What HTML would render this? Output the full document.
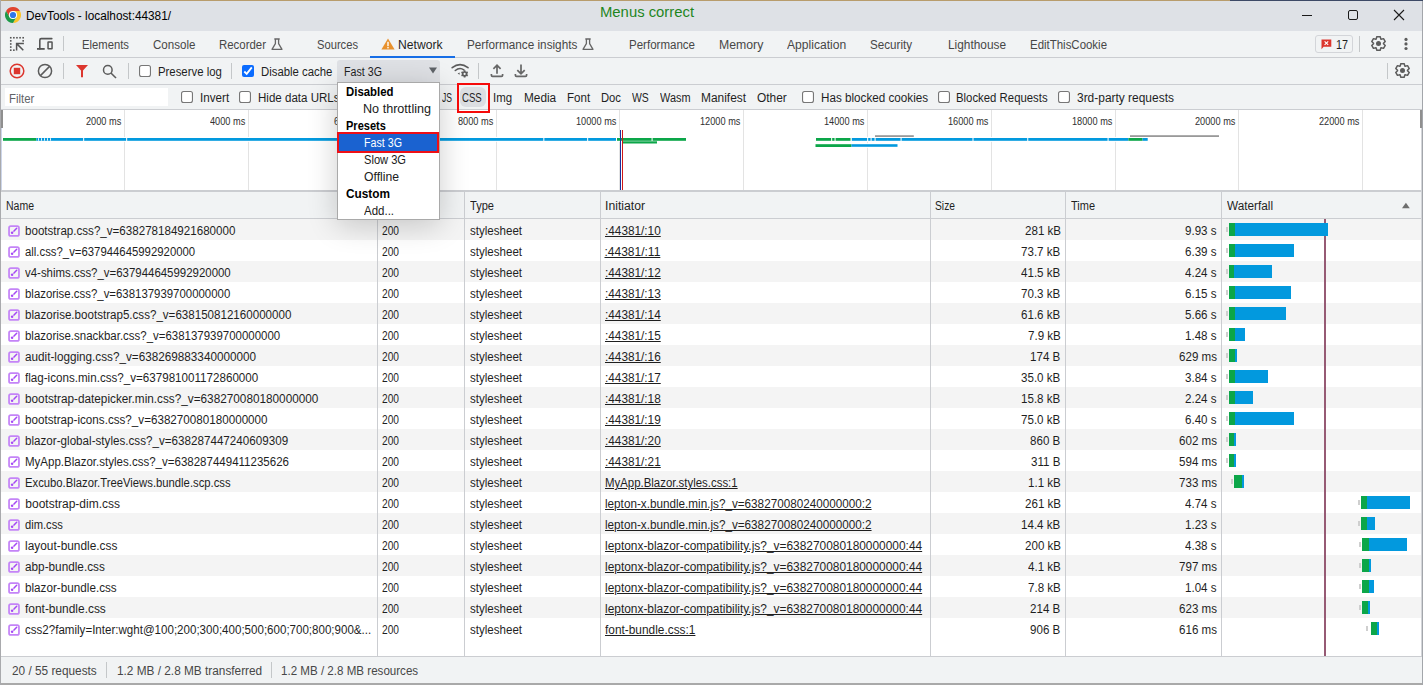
<!DOCTYPE html>
<html><head><meta charset="utf-8"><title>DevTools</title><style>
html,body{margin:0;padding:0;}
body{width:1423px;height:685px;overflow:hidden;position:relative;background:#fff;font-family:"Liberation Sans",sans-serif;}
.t{position:absolute;white-space:nowrap;transform-origin:0 0;}
.r{position:absolute;display:block;}
</style></head><body>
<div class="r" style="left:0px;top:0px;width:1423px;height:685px;background:#ffffff;"></div>
<div class="r" style="left:0px;top:0px;width:1423px;height:31px;background:#dee1e6;"></div>
<div class="r" style="left:0px;top:0px;width:1230px;height:1px;background:#b89c6c;"></div>
<div class="r" style="left:1230px;top:0px;width:193px;height:1px;background:#3d4a66;"></div>
<svg class="r" style="left:5px;top:7px" width="16" height="16" viewBox="0 0 16 16"><path d="M4.54 10 L1.07 4 A8 8 0 0 1 14.93 4 L8 4 Z" fill="#e0442f"/>
<path d="M8 4 L14.93 4 A8 8 0 0 1 8 16 L11.46 10 Z" fill="#fcc52b"/>
<path d="M11.46 10 L8 16 A8 8 0 0 1 1.07 4 L4.54 10 Z" fill="#1d9a48"/>
<circle cx="8" cy="8" r="4.1" fill="#fff"/><circle cx="8" cy="8" r="3.1" fill="#2f77ea"/></svg>
<div class="t" style="left:26.00px;top:10px;font-size:12px;line-height:12px;color:#000000;transform:scaleX(0.9838);">DevTools - localhost:44381/</div>
<div class="t" style="left:599.80px;top:5px;font-size:14px;line-height:14px;color:#1e861e;transform:scaleX(1.0603);">Menus correct</div>
<div class="r" style="left:1302px;top:15px;width:10px;height:1px;background:#1a1a1a;"></div>
<div class="r" style="left:1348px;top:10px;width:10px;height:10px;background:transparent;border:1px solid #1a1a1a;border-radius:2px;box-sizing:border-box;"></div>
<svg class="r" style="left:1393px;top:9px" width="12" height="12" viewBox="0 0 12 12"><path d="M1 1 L11 11 M11 1 L1 11" stroke="#1a1a1a" stroke-width="1.1"/></svg>
<div class="r" style="left:0px;top:31px;width:1423px;height:26px;background:#f1f3f4;"></div>
<div class="r" style="left:0px;top:57px;width:1423px;height:1px;background:#cbcdd1;"></div>
<svg class="r" style="left:8px;top:35px" width="18" height="18" viewBox="0 0 18 18"><rect x="1.95" y="1.95" width="1.6" height="1.6" fill="#555"/><rect x="5.06" y="1.95" width="1.6" height="1.6" fill="#555"/><rect x="8.16" y="1.95" width="1.6" height="1.6" fill="#555"/><rect x="11.27" y="1.95" width="1.6" height="1.6" fill="#555"/><rect x="14.37" y="1.95" width="1.6" height="1.6" fill="#555"/><rect x="1.95" y="5.06" width="1.6" height="1.6" fill="#555"/><rect x="1.95" y="8.16" width="1.6" height="1.6" fill="#555"/><rect x="1.95" y="11.27" width="1.6" height="1.6" fill="#555"/><rect x="1.95" y="14.37" width="1.6" height="1.6" fill="#555"/><rect x="5.06" y="14.37" width="1.6" height="1.6" fill="#555"/><rect x="14.37" y="5.06" width="1.6" height="1.6" fill="#555"/><path d="M8.6 15.4 V8.6 H15.9 M8.9 8.9 L15.3 15.2" stroke="#555" stroke-width="1.5" fill="none"/></svg>
<svg class="r" style="left:35px;top:35px" width="20" height="18" viewBox="0 0 20 18"><path d="M4.8 13.9 V5.2 Q4.8 3.66 6.3 3.66 H16.8" stroke="#555" stroke-width="1.6" fill="none" stroke-linecap="round"/><path d="M2 13.9 H9.7" stroke="#555" stroke-width="1.8"/><rect x="13.05" y="6.95" width="4" height="6.9" rx="0.3" stroke="#555" stroke-width="1.5" fill="none"/></svg>
<div class="r" style="left:63px;top:36px;width:1px;height:15px;background:#c4c7c9;"></div>
<div class="t" style="left:82.00px;top:39px;font-size:12px;line-height:12px;color:#474747;transform:scaleX(0.9397);">Elements</div>
<div class="t" style="left:152.50px;top:39px;font-size:12px;line-height:12px;color:#474747;transform:scaleX(0.9652);">Console</div>
<div class="t" style="left:219.00px;top:39px;font-size:12px;line-height:12px;color:#474747;transform:scaleX(0.9522);">Recorder</div>
<div class="t" style="left:316.50px;top:39px;font-size:12px;line-height:12px;color:#474747;transform:scaleX(0.9315);">Sources</div>
<div class="t" style="left:398.00px;top:39px;font-size:12px;line-height:12px;color:#1f1f1f;transform:scaleX(1.0110);">Network</div>
<div class="t" style="left:466.70px;top:39px;font-size:12px;line-height:12px;color:#474747;transform:scaleX(0.9787);">Performance insights</div>
<div class="t" style="left:629.00px;top:39px;font-size:12px;line-height:12px;color:#474747;transform:scaleX(0.9609);">Performance</div>
<div class="t" style="left:718.80px;top:39px;font-size:12px;line-height:12px;color:#474747;transform:scaleX(1.0221);">Memory</div>
<div class="t" style="left:786.80px;top:39px;font-size:12px;line-height:12px;color:#474747;transform:scaleX(1.0085);">Application</div>
<div class="t" style="left:870.00px;top:39px;font-size:12px;line-height:12px;color:#474747;transform:scaleX(0.9690);">Security</div>
<div class="t" style="left:948.00px;top:39px;font-size:12px;line-height:12px;color:#474747;transform:scaleX(0.9880);">Lighthouse</div>
<div class="t" style="left:1030.00px;top:39px;font-size:12px;line-height:12px;color:#474747;transform:scaleX(0.9541);">EditThisCookie</div>
<svg class="r" style="left:271px;top:38px" width="12" height="13" viewBox="0 0 12 13"><path d="M3.3 1 H8.7 M4.4 1 V5.6 L1 11.3 H11 L7.6 5.6 V1" stroke="#666" stroke-width="1.3" fill="none" stroke-linejoin="round"/></svg>
<svg class="r" style="left:582px;top:38px" width="12" height="13" viewBox="0 0 12 13"><path d="M3.3 1 H8.7 M4.4 1 V5.6 L1 11.3 H11 L7.6 5.6 V1" stroke="#666" stroke-width="1.3" fill="none" stroke-linejoin="round"/></svg>
<svg class="r" style="left:381px;top:38px" width="14" height="12" viewBox="0 0 14 12"><path d="M7 0.5 L13.6 11.6 H0.4 Z" fill="#e8912d"/><rect x="6.3" y="3.8" width="1.4" height="4.4" fill="#fff"/><rect x="6.3" y="9" width="1.4" height="1.4" fill="#fff"/></svg>
<div class="r" style="left:370px;top:56px;width:85px;height:2px;background:#176ee6;"></div>
<div class="r" style="left:1315px;top:35px;width:38px;height:18px;background:transparent;border:1px solid #d3d5d9;border-radius:3px;box-sizing:border-box;"></div>
<svg class="r" style="left:1321px;top:39px" width="11" height="11" viewBox="0 0 11 11"><path d="M0.5 0.5 H10.3 V7.8 H2.6 L0.5 10.3 Z" fill="#dc362e"/><path d="M3.6 2.3 L7.2 5.9 M7.2 2.3 L3.6 5.9" stroke="#fff" stroke-width="1.1"/></svg>
<div class="t" style="left:1336.00px;top:39px;font-size:12px;line-height:12px;color:#1f1f1f;transform:scaleX(0.8993);">17</div>
<div class="r" style="left:1359px;top:36px;width:1px;height:16px;background:#c4c7c9;"></div>
<svg class="r" style="left:1371px;top:36px" width="15" height="15" viewBox="0 0 15 15"><path d="M5.15 3.09 L5.81 0.71 L9.19 0.71 L9.85 3.09 L10.15 3.26 L12.54 2.64 L14.23 5.57 L12.50 7.33 L12.50 7.67 L14.23 9.43 L12.54 12.36 L10.15 11.74 L9.85 11.91 L9.19 14.29 L5.81 14.29 L5.15 11.91 L4.85 11.74 L2.46 12.36 L0.77 9.43 L2.50 7.67 L2.50 7.33 L0.77 5.57 L2.46 2.64 L4.85 3.26 Z" fill="none" stroke="#5c5c5c" stroke-width="1.5" stroke-linejoin="round"/><circle cx="7.5" cy="7.5" r="2.5" fill="#5c5c5c"/></svg>
<svg class="r" style="left:1403px;top:37px" width="6" height="14" viewBox="0 0 6 14"><circle cx="3" cy="2.4" r="1.6" fill="#5c5c5c"/><circle cx="3" cy="6.9" r="1.6" fill="#5c5c5c"/><circle cx="3" cy="11.5" r="1.6" fill="#5c5c5c"/></svg>
<div class="r" style="left:0px;top:58px;width:1423px;height:26px;background:#f1f3f4;"></div>
<div class="r" style="left:0px;top:84px;width:1423px;height:1px;background:#cbcdd1;"></div>
<svg class="r" style="left:9px;top:63px" width="16" height="16" viewBox="0 0 16 16"><circle cx="8" cy="8" r="6.8" stroke="#dc362e" stroke-width="1.5" fill="none"/><rect x="4.8" y="4.8" width="6.4" height="6.4" fill="#dc362e"/></svg>
<svg class="r" style="left:37px;top:63px" width="16" height="16" viewBox="0 0 16 16"><circle cx="8" cy="8" r="6.6" stroke="#5c5c5c" stroke-width="1.5" fill="none"/><path d="M3.4 12.6 L12.6 3.4" stroke="#5c5c5c" stroke-width="1.5"/></svg>
<div class="r" style="left:63px;top:63px;width:1px;height:16px;background:#c4c7c9;"></div>
<svg class="r" style="left:76px;top:65px" width="13" height="13" viewBox="0 0 13 13"><path d="M0 0 H12 L7 5.6 V12.2 H5 V5.6 Z" fill="#dc362e"/></svg>
<svg class="r" style="left:102px;top:64px" width="16" height="15" viewBox="0 0 16 15"><circle cx="5.8" cy="5.9" r="4.3" stroke="#5c5c5c" stroke-width="1.5" fill="none"/><path d="M8.9 9 L14 14" stroke="#5c5c5c" stroke-width="1.6"/></svg>
<div class="r" style="left:128px;top:63px;width:1px;height:16px;background:#c4c7c9;"></div>
<svg class="r" style="left:139px;top:65px" width="12" height="12" viewBox="0 0 12 12"><rect x="0.55" y="0.55" width="10.9" height="10.9" rx="2" fill="#fff" stroke="#777" stroke-width="1.1"/></svg>
<div class="t" style="left:157.50px;top:66px;font-size:12px;line-height:12px;color:#1f1f1f;transform:scaleX(0.9472);">Preserve log</div>
<div class="r" style="left:231px;top:63px;width:1px;height:16px;background:#c4c7c9;"></div>
<svg class="r" style="left:242px;top:65px" width="12" height="12" viewBox="0 0 12 12"><rect x="0" y="0" width="12" height="12" rx="2" fill="#0b6cff"/><path d="M2.3 6.5 L4.7 8.9 L9.8 2.4" stroke="#fff" stroke-width="1.8" fill="none"/></svg>
<div class="t" style="left:260.60px;top:66px;font-size:12px;line-height:12px;color:#1f1f1f;transform:scaleX(0.9473);">Disable cache</div>
<div class="r" style="left:337px;top:60px;width:103px;height:22px;background:#dfe1e5;border-radius:3px 3px 0 0;"></div>
<div class="t" style="left:343.70px;top:66px;font-size:12px;line-height:12px;color:#1f1f1f;transform:scaleX(0.8885);">Fast 3G</div>
<svg class="r" style="left:429px;top:67px" width="8" height="7" viewBox="0 0 8 7"><path d="M0 0.5 H8 L4 6.5 Z" fill="#5f6368"/></svg>
<svg class="r" style="left:450px;top:62px" width="20" height="16" viewBox="0 0 20 16"><path d="M2.2 5.7 Q10 -0.5 18 5.7" stroke="#5c5c5c" stroke-width="1.6" fill="none" stroke-linecap="round"/>
<path d="M5.3 8.5 Q9.6 4.8 13.9 7.8" stroke="#5c5c5c" stroke-width="1.6" fill="none" stroke-linecap="round"/>
<path d="M7.6 11.6 L9.6 10.4 V12.8 Z" fill="#5c5c5c"/><rect x="13.70" y="8.30" width="1.8" height="7.2" fill="#5c5c5c" transform="rotate(0 14.6 11.9)"/><rect x="13.70" y="8.30" width="1.8" height="7.2" fill="#5c5c5c" transform="rotate(60 14.6 11.9)"/><rect x="13.70" y="8.30" width="1.8" height="7.2" fill="#5c5c5c" transform="rotate(120 14.6 11.9)"/><circle cx="14.6" cy="11.9" r="2.7" fill="#5c5c5c"/><circle cx="14.6" cy="11.9" r="1.1" fill="#f1f3f4"/></svg>
<div class="r" style="left:478px;top:63px;width:1px;height:16px;background:#c4c7c9;"></div>
<svg class="r" style="left:490px;top:63px" width="14" height="15" viewBox="0 0 14 15"><path d="M7 10.8 V2.6 M3.4 5.8 L7 2.2 L10.6 5.8" stroke="#666" stroke-width="1.7" fill="none"/><path d="M1.4 11 V12.3 Q1.4 13.4 2.5 13.4 H11.5 Q12.6 13.4 12.6 12.3 V11" stroke="#666" stroke-width="1.7" fill="none"/></svg>
<svg class="r" style="left:514px;top:63px" width="14" height="15" viewBox="0 0 14 15"><path d="M7 1.6 V10.2 M3.3 7.1 L7 10.8 L10.7 7.1" stroke="#666" stroke-width="1.7" fill="none"/><path d="M1.4 11 V12.3 Q1.4 13.4 2.5 13.4 H11.5 Q12.6 13.4 12.6 12.3 V11" stroke="#666" stroke-width="1.7" fill="none"/></svg>
<div class="r" style="left:1387px;top:63px;width:1px;height:16px;background:#c4c7c9;"></div>
<svg class="r" style="left:1395px;top:63px" width="15" height="15" viewBox="0 0 15 15"><path d="M5.15 3.09 L5.81 0.71 L9.19 0.71 L9.85 3.09 L10.15 3.26 L12.54 2.64 L14.23 5.57 L12.50 7.33 L12.50 7.67 L14.23 9.43 L12.54 12.36 L10.15 11.74 L9.85 11.91 L9.19 14.29 L5.81 14.29 L5.15 11.91 L4.85 11.74 L2.46 12.36 L0.77 9.43 L2.50 7.67 L2.50 7.33 L0.77 5.57 L2.46 2.64 L4.85 3.26 Z" fill="none" stroke="#5c5c5c" stroke-width="1.5" stroke-linejoin="round"/><circle cx="7.5" cy="7.5" r="2.5" fill="#5c5c5c"/></svg>
<div class="r" style="left:0px;top:85px;width:1423px;height:24px;background:#f1f3f4;"></div>
<div class="r" style="left:0px;top:109px;width:1423px;height:1px;background:#cbcdd1;"></div>
<div class="r" style="left:5px;top:88px;width:163px;height:18px;background:#ffffff;"></div>
<div class="t" style="left:8.60px;top:93px;font-size:12px;line-height:12px;color:#5f6368;transform:scaleX(0.9486);">Filter</div>
<svg class="r" style="left:181px;top:91px" width="12" height="12" viewBox="0 0 12 12"><rect x="0.55" y="0.55" width="10.9" height="10.9" rx="2" fill="#fff" stroke="#777" stroke-width="1.1"/></svg>
<div class="t" style="left:199.80px;top:92px;font-size:12px;line-height:12px;color:#1f1f1f;transform:scaleX(0.9700);">Invert</div>
<svg class="r" style="left:239px;top:91px" width="12" height="12" viewBox="0 0 12 12"><rect x="0.55" y="0.55" width="10.9" height="10.9" rx="2" fill="#fff" stroke="#777" stroke-width="1.1"/></svg>
<div class="t" style="left:258.00px;top:92px;font-size:12px;line-height:12px;color:#1f1f1f;transform:scaleX(0.9622);">Hide data URLs</div>
<div class="t" style="left:441.60px;top:92px;font-size:12px;line-height:12px;color:#1f1f1f;transform:scaleX(0.7143);">JS</div>
<div class="r" style="left:460px;top:87px;width:26px;height:20px;background:#dcdee2;border-radius:6px;"></div>
<div class="t" style="left:462.40px;top:92px;font-size:12px;line-height:12px;color:#1f1f1f;transform:scaleX(0.7985);">CSS</div>
<div class="t" style="left:493.30px;top:92px;font-size:12px;line-height:12px;color:#1f1f1f;transform:scaleX(0.9550);">Img</div>
<div class="t" style="left:523.80px;top:92px;font-size:12px;line-height:12px;color:#1f1f1f;transform:scaleX(0.9851);">Media</div>
<div class="t" style="left:566.70px;top:92px;font-size:12px;line-height:12px;color:#1f1f1f;transform:scaleX(0.9625);">Font</div>
<div class="t" style="left:600.70px;top:92px;font-size:12px;line-height:12px;color:#1f1f1f;transform:scaleX(0.9370);">Doc</div>
<div class="t" style="left:631.60px;top:92px;font-size:12px;line-height:12px;color:#1f1f1f;transform:scaleX(0.8692);">WS</div>
<div class="t" style="left:659.50px;top:92px;font-size:12px;line-height:12px;color:#1f1f1f;transform:scaleX(0.9088);">Wasm</div>
<div class="t" style="left:701.30px;top:92px;font-size:12px;line-height:12px;color:#1f1f1f;transform:scaleX(0.9946);">Manifest</div>
<div class="t" style="left:756.90px;top:92px;font-size:12px;line-height:12px;color:#1f1f1f;transform:scaleX(0.9933);">Other</div>
<svg class="r" style="left:802px;top:91px" width="12" height="12" viewBox="0 0 12 12"><rect x="0.55" y="0.55" width="10.9" height="10.9" rx="2" fill="#fff" stroke="#777" stroke-width="1.1"/></svg>
<div class="t" style="left:820.70px;top:92px;font-size:12px;line-height:12px;color:#1f1f1f;transform:scaleX(0.9732);">Has blocked cookies</div>
<svg class="r" style="left:938px;top:91px" width="12" height="12" viewBox="0 0 12 12"><rect x="0.55" y="0.55" width="10.9" height="10.9" rx="2" fill="#fff" stroke="#777" stroke-width="1.1"/></svg>
<div class="t" style="left:956.40px;top:92px;font-size:12px;line-height:12px;color:#1f1f1f;transform:scaleX(0.9472);">Blocked Requests</div>
<svg class="r" style="left:1058px;top:91px" width="12" height="12" viewBox="0 0 12 12"><rect x="0.55" y="0.55" width="10.9" height="10.9" rx="2" fill="#fff" stroke="#777" stroke-width="1.1"/></svg>
<div class="t" style="left:1076.90px;top:92px;font-size:12px;line-height:12px;color:#1f1f1f;transform:scaleX(0.9953);">3rd-party requests</div>
<div class="r" style="left:0px;top:110px;width:1423px;height:80px;background:#ffffff;"></div>
<div class="r" style="left:0px;top:190px;width:1423px;height:2px;background:#cbcdd1;"></div>
<div class="r" style="left:124px;top:110px;width:1px;height:80px;background:#e3e3e3;"></div>
<div class="t" style="left:86.41px;top:117px;font-size:10px;line-height:10px;color:#303030;transform:scaleX(0.9200);">2000 ms</div>
<div class="r" style="left:248px;top:110px;width:1px;height:80px;background:#e3e3e3;"></div>
<div class="t" style="left:210.41px;top:117px;font-size:10px;line-height:10px;color:#303030;transform:scaleX(0.9200);">4000 ms</div>
<div class="r" style="left:372px;top:110px;width:1px;height:80px;background:#e3e3e3;"></div>
<div class="t" style="left:334.41px;top:117px;font-size:10px;line-height:10px;color:#303030;transform:scaleX(0.9200);">6000 ms</div>
<div class="r" style="left:496px;top:110px;width:1px;height:80px;background:#e3e3e3;"></div>
<div class="t" style="left:458.41px;top:117px;font-size:10px;line-height:10px;color:#303030;transform:scaleX(0.9200);">8000 ms</div>
<div class="r" style="left:619px;top:110px;width:1px;height:80px;background:#e3e3e3;"></div>
<div class="t" style="left:576.29px;top:117px;font-size:10px;line-height:10px;color:#303030;transform:scaleX(0.9200);">10000 ms</div>
<div class="r" style="left:743px;top:110px;width:1px;height:80px;background:#e3e3e3;"></div>
<div class="t" style="left:700.29px;top:117px;font-size:10px;line-height:10px;color:#303030;transform:scaleX(0.9200);">12000 ms</div>
<div class="r" style="left:867px;top:110px;width:1px;height:80px;background:#e3e3e3;"></div>
<div class="t" style="left:824.29px;top:117px;font-size:10px;line-height:10px;color:#303030;transform:scaleX(0.9200);">14000 ms</div>
<div class="r" style="left:991px;top:110px;width:1px;height:80px;background:#e3e3e3;"></div>
<div class="t" style="left:948.29px;top:117px;font-size:10px;line-height:10px;color:#303030;transform:scaleX(0.9200);">16000 ms</div>
<div class="r" style="left:1115px;top:110px;width:1px;height:80px;background:#e3e3e3;"></div>
<div class="t" style="left:1072.29px;top:117px;font-size:10px;line-height:10px;color:#303030;transform:scaleX(0.9200);">18000 ms</div>
<div class="r" style="left:1238px;top:110px;width:1px;height:80px;background:#e3e3e3;"></div>
<div class="t" style="left:1195.29px;top:117px;font-size:10px;line-height:10px;color:#303030;transform:scaleX(0.9200);">20000 ms</div>
<div class="r" style="left:1362px;top:110px;width:1px;height:80px;background:#e3e3e3;"></div>
<div class="t" style="left:1319.29px;top:117px;font-size:10px;line-height:10px;color:#303030;transform:scaleX(0.9200);">22000 ms</div>
<div class="r" style="left:1420px;top:110px;width:2px;height:18px;background:#8f8f8f;"></div>
<svg class="r" style="left:0px;top:110px" width="1423" height="80" viewBox="0 0 1423 80"><rect x="3.00" y="27.00" width="33.40" height="4.8" fill="#fff"/><rect x="36.40" y="27.00" width="579.60" height="4.8" fill="#fff"/><rect x="617.00" y="27.00" width="69.00" height="4.8" fill="#fff"/><rect x="622.80" y="30.30" width="34.20" height="4.2" fill="#fff"/><rect x="816.00" y="27.00" width="34.50" height="4.8" fill="#fff"/><rect x="851.80" y="27.00" width="276.60" height="4.8" fill="#fff"/><rect x="815.50" y="33.20" width="35.90" height="4.8" fill="#fff"/><rect x="851.40" y="33.20" width="46.10" height="4.6" fill="#fff"/><rect x="875.00" y="24.20" width="38.80" height="3.8" fill="#fff"/><rect x="1128.40" y="27.00" width="14.20" height="4.8" fill="#fff"/><rect x="1142.60" y="27.00" width="5.10" height="4.8" fill="#fff"/><rect x="1130.00" y="24.20" width="89.00" height="3.8" fill="#fff"/><rect x="3.00" y="28.00" width="33.40" height="2.8" fill="#0ca649"/><rect x="36.40" y="28.00" width="579.60" height="2.8" fill="#0299de"/><rect x="38" y="28.2" width="1" height="2.5" fill="#e8f4fb"/><rect x="41" y="28.2" width="1" height="2.5" fill="#e8f4fb"/><rect x="44" y="28.2" width="1" height="2.5" fill="#e8f4fb"/><rect x="47" y="28.2" width="1" height="2.5" fill="#e8f4fb"/><rect x="50" y="28.2" width="1" height="2.5" fill="#e8f4fb"/><rect x="617.00" y="28.00" width="69.00" height="2.8" fill="#0ca649"/><rect x="622.80" y="31.30" width="34.20" height="2.2" fill="#0ca649"/><rect x="816.00" y="28.00" width="34.50" height="2.8" fill="#0ca649"/><rect x="851.80" y="28.00" width="276.60" height="2.8" fill="#0299de"/><rect x="815.50" y="34.20" width="35.90" height="2.8" fill="#0ca649"/><rect x="851.40" y="34.20" width="46.10" height="2.6" fill="#0299de"/><rect x="875.00" y="25.20" width="38.80" height="1.8" fill="#999999"/><rect x="1128.40" y="28.00" width="14.20" height="2.8" fill="#0ca649"/><rect x="1142.60" y="28.00" width="5.10" height="2.8" fill="#0299de"/><rect x="1130.00" y="25.20" width="89.00" height="1.8" fill="#999999"/><rect x="83.00" y="27.8" width="1.2" height="3.2" fill="#fff" opacity="0.85"/><rect x="126.00" y="27.8" width="1.2" height="3.2" fill="#fff" opacity="0.85"/><rect x="543.20" y="27.8" width="1.2" height="3.2" fill="#fff" opacity="0.85"/><rect x="587.00" y="27.8" width="1.2" height="3.2" fill="#fff" opacity="0.85"/><rect x="651.50" y="27.8" width="1.2" height="3.2" fill="#fff" opacity="0.85"/><rect x="831.00" y="27.8" width="1.2" height="3.2" fill="#fff" opacity="0.85"/><rect x="834.50" y="27.8" width="1.2" height="3.2" fill="#fff" opacity="0.85"/><rect x="867.00" y="27.8" width="1.2" height="3.2" fill="#fff" opacity="0.85"/><rect x="870.50" y="27.8" width="1.2" height="3.2" fill="#fff" opacity="0.85"/><rect x="874.50" y="27.8" width="1.2" height="3.2" fill="#fff" opacity="0.85"/><rect x="900.50" y="27.8" width="1.2" height="3.2" fill="#fff" opacity="0.85"/><rect x="972.40" y="27.8" width="1.2" height="3.2" fill="#fff" opacity="0.85"/><rect x="1027.10" y="27.8" width="1.2" height="3.2" fill="#fff" opacity="0.85"/><rect x="1107.50" y="27.8" width="1.2" height="3.2" fill="#fff" opacity="0.85"/></svg>
<div class="r" style="left:620px;top:130px;width:1px;height:60px;background:#1a2fa0;"></div>
<div class="r" style="left:622px;top:130px;width:1px;height:60px;background:#d01818;"></div>
<div class="r" style="left:0px;top:192px;width:1421px;height:26px;background:#f1f3f4;"></div>
<div class="r" style="left:0px;top:218px;width:1421px;height:1px;background:#cbcdd1;"></div>
<div class="t" style="left:6.20px;top:200px;font-size:12px;line-height:12px;color:#1f1f1f;transform:scaleX(0.8746);">Name</div>
<div class="t" style="left:469.60px;top:200px;font-size:12px;line-height:12px;color:#1f1f1f;transform:scaleX(0.9225);">Type</div>
<div class="t" style="left:605.40px;top:200px;font-size:12px;line-height:12px;color:#1f1f1f;transform:scaleX(1.0167);">Initiator</div>
<div class="t" style="left:934.80px;top:200px;font-size:12px;line-height:12px;color:#1f1f1f;transform:scaleX(0.8568);">Size</div>
<div class="t" style="left:1071.00px;top:200px;font-size:12px;line-height:12px;color:#1f1f1f;transform:scaleX(0.9148);">Time</div>
<div class="t" style="left:1226.50px;top:200px;font-size:12px;line-height:12px;color:#1f1f1f;transform:scaleX(0.9807);">Waterfall</div>
<svg class="r" style="left:1401px;top:202px" width="9" height="7" viewBox="0 0 9 7"><path d="M1 6.3 L4.9 0.7 L8.8 6.3 Z" fill="#6e6e6e"/></svg>
<div class="r" style="left:0px;top:219px;width:1421px;height:437px;background:#ffffff;"></div>
<div class="r" style="left:1px;top:219px;width:1420px;height:21px;background:#f4f4f4;"></div>
<div class="r" style="left:1px;top:261px;width:1420px;height:21px;background:#f4f4f4;"></div>
<div class="r" style="left:1px;top:303px;width:1420px;height:21px;background:#f4f4f4;"></div>
<div class="r" style="left:1px;top:345px;width:1420px;height:21px;background:#f4f4f4;"></div>
<div class="r" style="left:1px;top:387px;width:1420px;height:21px;background:#f4f4f4;"></div>
<div class="r" style="left:1px;top:429px;width:1420px;height:21px;background:#f4f4f4;"></div>
<div class="r" style="left:1px;top:471px;width:1420px;height:21px;background:#f4f4f4;"></div>
<div class="r" style="left:1px;top:513px;width:1420px;height:21px;background:#f4f4f4;"></div>
<div class="r" style="left:1px;top:555px;width:1420px;height:21px;background:#f4f4f4;"></div>
<div class="r" style="left:1px;top:597px;width:1420px;height:21px;background:#f4f4f4;"></div>
<div class="r" style="left:377px;top:192px;width:1px;height:464px;background:#cbcdd1;"></div>
<div class="r" style="left:464px;top:192px;width:1px;height:464px;background:#cbcdd1;"></div>
<div class="r" style="left:600px;top:192px;width:1px;height:464px;background:#cbcdd1;"></div>
<div class="r" style="left:930px;top:192px;width:1px;height:464px;background:#cbcdd1;"></div>
<div class="r" style="left:1065px;top:192px;width:1px;height:464px;background:#cbcdd1;"></div>
<div class="r" style="left:1221px;top:192px;width:1px;height:464px;background:#cbcdd1;"></div>
<div class="r" style="left:1324px;top:219px;width:2px;height:437px;background:#965a74;"></div>
<svg class="r" style="left:8px;top:225px" width="12" height="12" viewBox="0 0 12 12"><rect x="1.05" y="1.05" width="9.9" height="9.9" rx="1.8" stroke="#c484f7" stroke-width="1.75" fill="none"/><path d="M6 6.1 L8.7 3.3" stroke="#a548f5" stroke-width="1.5" stroke-linecap="round"/><circle cx="4.1" cy="7.8" r="1.25" fill="#a548f5"/></svg>
<div class="t" style="left:25.30px;top:225px;font-size:12px;line-height:12px;color:#1f1f1f;transform:scaleX(0.9656);">bootstrap.css?_v=638278184921680000</div>
<div class="t" style="left:382.30px;top:225px;font-size:12px;line-height:12px;color:#1f1f1f;transform:scaleX(0.8493);">200</div>
<div class="t" style="left:469.60px;top:225px;font-size:12px;line-height:12px;color:#1f1f1f;transform:scaleX(0.9627);">stylesheet</div>
<div class="t" style="left:604.50px;top:225px;font-size:12px;line-height:12px;color:#1f1f1f;transform:scaleX(0.9826);text-decoration:underline;">:44381/:10</div>
<div class="t" style="left:1024.66px;top:225px;font-size:12px;line-height:12px;color:#1f1f1f;transform:scaleX(0.9650);">281 kB</div>
<div class="t" style="left:1185.37px;top:225px;font-size:12px;line-height:12px;color:#1f1f1f;transform:scaleX(0.9650);">9.93 s</div>
<div class="r" style="left:1226px;top:227px;width:2px;height:5px;background:#cfcfcf;"></div>
<div class="r" style="left:1229px;top:223px;width:6px;height:13px;background:#0ca649;"></div>
<div class="r" style="left:1235px;top:223px;width:93px;height:13px;background:#0299de;"></div>
<svg class="r" style="left:8px;top:246px" width="12" height="12" viewBox="0 0 12 12"><rect x="1.05" y="1.05" width="9.9" height="9.9" rx="1.8" stroke="#c484f7" stroke-width="1.75" fill="none"/><path d="M6 6.1 L8.7 3.3" stroke="#a548f5" stroke-width="1.5" stroke-linecap="round"/><circle cx="4.1" cy="7.8" r="1.25" fill="#a548f5"/></svg>
<div class="t" style="left:25.30px;top:246px;font-size:12px;line-height:12px;color:#1f1f1f;transform:scaleX(0.9461);">all.css?_v=637944645992920000</div>
<div class="t" style="left:382.30px;top:246px;font-size:12px;line-height:12px;color:#1f1f1f;transform:scaleX(0.8493);">200</div>
<div class="t" style="left:469.60px;top:246px;font-size:12px;line-height:12px;color:#1f1f1f;transform:scaleX(0.9627);">stylesheet</div>
<div class="t" style="left:604.50px;top:246px;font-size:12px;line-height:12px;color:#1f1f1f;text-decoration:underline;">:44381/:11</div>
<div class="t" style="left:1021.45px;top:246px;font-size:12px;line-height:12px;color:#1f1f1f;transform:scaleX(0.9650);">73.7 kB</div>
<div class="t" style="left:1185.37px;top:246px;font-size:12px;line-height:12px;color:#1f1f1f;transform:scaleX(0.9650);">6.39 s</div>
<div class="r" style="left:1226px;top:248px;width:2px;height:5px;background:#cfcfcf;"></div>
<div class="r" style="left:1229px;top:244px;width:6px;height:13px;background:#0ca649;"></div>
<div class="r" style="left:1235px;top:244px;width:59px;height:13px;background:#0299de;"></div>
<svg class="r" style="left:8px;top:267px" width="12" height="12" viewBox="0 0 12 12"><rect x="1.05" y="1.05" width="9.9" height="9.9" rx="1.8" stroke="#c484f7" stroke-width="1.75" fill="none"/><path d="M6 6.1 L8.7 3.3" stroke="#a548f5" stroke-width="1.5" stroke-linecap="round"/><circle cx="4.1" cy="7.8" r="1.25" fill="#a548f5"/></svg>
<div class="t" style="left:25.30px;top:267px;font-size:12px;line-height:12px;color:#1f1f1f;transform:scaleX(0.9532);">v4-shims.css?_v=637944645992920000</div>
<div class="t" style="left:382.30px;top:267px;font-size:12px;line-height:12px;color:#1f1f1f;transform:scaleX(0.8493);">200</div>
<div class="t" style="left:469.60px;top:267px;font-size:12px;line-height:12px;color:#1f1f1f;transform:scaleX(0.9627);">stylesheet</div>
<div class="t" style="left:604.50px;top:267px;font-size:12px;line-height:12px;color:#1f1f1f;transform:scaleX(0.9826);text-decoration:underline;">:44381/:12</div>
<div class="t" style="left:1021.45px;top:267px;font-size:12px;line-height:12px;color:#1f1f1f;transform:scaleX(0.9650);">41.5 kB</div>
<div class="t" style="left:1185.37px;top:267px;font-size:12px;line-height:12px;color:#1f1f1f;transform:scaleX(0.9650);">4.24 s</div>
<div class="r" style="left:1226px;top:269px;width:2px;height:5px;background:#cfcfcf;"></div>
<div class="r" style="left:1229px;top:265px;width:5px;height:13px;background:#0ca649;"></div>
<div class="r" style="left:1234px;top:265px;width:38px;height:13px;background:#0299de;"></div>
<svg class="r" style="left:8px;top:288px" width="12" height="12" viewBox="0 0 12 12"><rect x="1.05" y="1.05" width="9.9" height="9.9" rx="1.8" stroke="#c484f7" stroke-width="1.75" fill="none"/><path d="M6 6.1 L8.7 3.3" stroke="#a548f5" stroke-width="1.5" stroke-linecap="round"/><circle cx="4.1" cy="7.8" r="1.25" fill="#a548f5"/></svg>
<div class="t" style="left:25.30px;top:288px;font-size:12px;line-height:12px;color:#1f1f1f;transform:scaleX(0.9508);">blazorise.css?_v=638137939700000000</div>
<div class="t" style="left:382.30px;top:288px;font-size:12px;line-height:12px;color:#1f1f1f;transform:scaleX(0.8493);">200</div>
<div class="t" style="left:469.60px;top:288px;font-size:12px;line-height:12px;color:#1f1f1f;transform:scaleX(0.9627);">stylesheet</div>
<div class="t" style="left:604.50px;top:288px;font-size:12px;line-height:12px;color:#1f1f1f;transform:scaleX(0.9826);text-decoration:underline;">:44381/:13</div>
<div class="t" style="left:1021.45px;top:288px;font-size:12px;line-height:12px;color:#1f1f1f;transform:scaleX(0.9650);">70.3 kB</div>
<div class="t" style="left:1185.37px;top:288px;font-size:12px;line-height:12px;color:#1f1f1f;transform:scaleX(0.9650);">6.15 s</div>
<div class="r" style="left:1226px;top:290px;width:2px;height:5px;background:#cfcfcf;"></div>
<div class="r" style="left:1229px;top:286px;width:6px;height:13px;background:#0ca649;"></div>
<div class="r" style="left:1235px;top:286px;width:56px;height:13px;background:#0299de;"></div>
<svg class="r" style="left:8px;top:309px" width="12" height="12" viewBox="0 0 12 12"><rect x="1.05" y="1.05" width="9.9" height="9.9" rx="1.8" stroke="#c484f7" stroke-width="1.75" fill="none"/><path d="M6 6.1 L8.7 3.3" stroke="#a548f5" stroke-width="1.5" stroke-linecap="round"/><circle cx="4.1" cy="7.8" r="1.25" fill="#a548f5"/></svg>
<div class="t" style="left:25.30px;top:309px;font-size:12px;line-height:12px;color:#1f1f1f;transform:scaleX(0.9655);">blazorise.bootstrap5.css?_v=638150812160000000</div>
<div class="t" style="left:382.30px;top:309px;font-size:12px;line-height:12px;color:#1f1f1f;transform:scaleX(0.8493);">200</div>
<div class="t" style="left:469.60px;top:309px;font-size:12px;line-height:12px;color:#1f1f1f;transform:scaleX(0.9627);">stylesheet</div>
<div class="t" style="left:604.50px;top:309px;font-size:12px;line-height:12px;color:#1f1f1f;transform:scaleX(0.9826);text-decoration:underline;">:44381/:14</div>
<div class="t" style="left:1021.45px;top:309px;font-size:12px;line-height:12px;color:#1f1f1f;transform:scaleX(0.9650);">61.6 kB</div>
<div class="t" style="left:1185.37px;top:309px;font-size:12px;line-height:12px;color:#1f1f1f;transform:scaleX(0.9650);">5.66 s</div>
<div class="r" style="left:1226px;top:311px;width:2px;height:5px;background:#cfcfcf;"></div>
<div class="r" style="left:1229px;top:307px;width:6px;height:13px;background:#0ca649;"></div>
<div class="r" style="left:1235px;top:307px;width:51px;height:13px;background:#0299de;"></div>
<svg class="r" style="left:8px;top:330px" width="12" height="12" viewBox="0 0 12 12"><rect x="1.05" y="1.05" width="9.9" height="9.9" rx="1.8" stroke="#c484f7" stroke-width="1.75" fill="none"/><path d="M6 6.1 L8.7 3.3" stroke="#a548f5" stroke-width="1.5" stroke-linecap="round"/><circle cx="4.1" cy="7.8" r="1.25" fill="#a548f5"/></svg>
<div class="t" style="left:25.30px;top:330px;font-size:12px;line-height:12px;color:#1f1f1f;transform:scaleX(0.9548);">blazorise.snackbar.css?_v=638137939700000000</div>
<div class="t" style="left:382.30px;top:330px;font-size:12px;line-height:12px;color:#1f1f1f;transform:scaleX(0.8493);">200</div>
<div class="t" style="left:469.60px;top:330px;font-size:12px;line-height:12px;color:#1f1f1f;transform:scaleX(0.9627);">stylesheet</div>
<div class="t" style="left:604.50px;top:330px;font-size:12px;line-height:12px;color:#1f1f1f;transform:scaleX(0.9826);text-decoration:underline;">:44381/:15</div>
<div class="t" style="left:1027.89px;top:330px;font-size:12px;line-height:12px;color:#1f1f1f;transform:scaleX(0.9650);">7.9 kB</div>
<div class="t" style="left:1185.37px;top:330px;font-size:12px;line-height:12px;color:#1f1f1f;transform:scaleX(0.9650);">1.48 s</div>
<div class="r" style="left:1226px;top:332px;width:2px;height:5px;background:#cfcfcf;"></div>
<div class="r" style="left:1229px;top:328px;width:6px;height:13px;background:#0ca649;"></div>
<div class="r" style="left:1235px;top:328px;width:10px;height:13px;background:#0299de;"></div>
<svg class="r" style="left:8px;top:351px" width="12" height="12" viewBox="0 0 12 12"><rect x="1.05" y="1.05" width="9.9" height="9.9" rx="1.8" stroke="#c484f7" stroke-width="1.75" fill="none"/><path d="M6 6.1 L8.7 3.3" stroke="#a548f5" stroke-width="1.5" stroke-linecap="round"/><circle cx="4.1" cy="7.8" r="1.25" fill="#a548f5"/></svg>
<div class="t" style="left:25.30px;top:351px;font-size:12px;line-height:12px;color:#1f1f1f;transform:scaleX(0.9767);">audit-logging.css?_v=638269883340000000</div>
<div class="t" style="left:382.30px;top:351px;font-size:12px;line-height:12px;color:#1f1f1f;transform:scaleX(0.8493);">200</div>
<div class="t" style="left:469.60px;top:351px;font-size:12px;line-height:12px;color:#1f1f1f;transform:scaleX(0.9627);">stylesheet</div>
<div class="t" style="left:604.50px;top:351px;font-size:12px;line-height:12px;color:#1f1f1f;transform:scaleX(0.9826);text-decoration:underline;">:44381/:16</div>
<div class="t" style="left:1030.45px;top:351px;font-size:12px;line-height:12px;color:#1f1f1f;transform:scaleX(0.9650);">174 B</div>
<div class="t" style="left:1178.93px;top:351px;font-size:12px;line-height:12px;color:#1f1f1f;transform:scaleX(0.9650);">629 ms</div>
<div class="r" style="left:1226px;top:353px;width:2px;height:5px;background:#cfcfcf;"></div>
<div class="r" style="left:1229px;top:349px;width:6px;height:13px;background:#0ca649;"></div>
<div class="r" style="left:1235px;top:349px;width:2px;height:13px;background:#0299de;"></div>
<svg class="r" style="left:8px;top:372px" width="12" height="12" viewBox="0 0 12 12"><rect x="1.05" y="1.05" width="9.9" height="9.9" rx="1.8" stroke="#c484f7" stroke-width="1.75" fill="none"/><path d="M6 6.1 L8.7 3.3" stroke="#a548f5" stroke-width="1.5" stroke-linecap="round"/><circle cx="4.1" cy="7.8" r="1.25" fill="#a548f5"/></svg>
<div class="t" style="left:25.30px;top:372px;font-size:12px;line-height:12px;color:#1f1f1f;transform:scaleX(0.9679);">flag-icons.min.css?_v=637981001172860000</div>
<div class="t" style="left:382.30px;top:372px;font-size:12px;line-height:12px;color:#1f1f1f;transform:scaleX(0.8493);">200</div>
<div class="t" style="left:469.60px;top:372px;font-size:12px;line-height:12px;color:#1f1f1f;transform:scaleX(0.9627);">stylesheet</div>
<div class="t" style="left:604.50px;top:372px;font-size:12px;line-height:12px;color:#1f1f1f;transform:scaleX(0.9826);text-decoration:underline;">:44381/:17</div>
<div class="t" style="left:1021.45px;top:372px;font-size:12px;line-height:12px;color:#1f1f1f;transform:scaleX(0.9650);">35.0 kB</div>
<div class="t" style="left:1185.37px;top:372px;font-size:12px;line-height:12px;color:#1f1f1f;transform:scaleX(0.9650);">3.84 s</div>
<div class="r" style="left:1226px;top:374px;width:2px;height:5px;background:#cfcfcf;"></div>
<div class="r" style="left:1229px;top:370px;width:6px;height:13px;background:#0ca649;"></div>
<div class="r" style="left:1235px;top:370px;width:33px;height:13px;background:#0299de;"></div>
<svg class="r" style="left:8px;top:393px" width="12" height="12" viewBox="0 0 12 12"><rect x="1.05" y="1.05" width="9.9" height="9.9" rx="1.8" stroke="#c484f7" stroke-width="1.75" fill="none"/><path d="M6 6.1 L8.7 3.3" stroke="#a548f5" stroke-width="1.5" stroke-linecap="round"/><circle cx="4.1" cy="7.8" r="1.25" fill="#a548f5"/></svg>
<div class="t" style="left:25.30px;top:393px;font-size:12px;line-height:12px;color:#1f1f1f;transform:scaleX(0.9804);">bootstrap-datepicker.min.css?_v=638270080180000000</div>
<div class="t" style="left:382.30px;top:393px;font-size:12px;line-height:12px;color:#1f1f1f;transform:scaleX(0.8493);">200</div>
<div class="t" style="left:469.60px;top:393px;font-size:12px;line-height:12px;color:#1f1f1f;transform:scaleX(0.9627);">stylesheet</div>
<div class="t" style="left:604.50px;top:393px;font-size:12px;line-height:12px;color:#1f1f1f;transform:scaleX(0.9826);text-decoration:underline;">:44381/:18</div>
<div class="t" style="left:1021.45px;top:393px;font-size:12px;line-height:12px;color:#1f1f1f;transform:scaleX(0.9650);">15.8 kB</div>
<div class="t" style="left:1185.37px;top:393px;font-size:12px;line-height:12px;color:#1f1f1f;transform:scaleX(0.9650);">2.24 s</div>
<div class="r" style="left:1226px;top:395px;width:2px;height:5px;background:#cfcfcf;"></div>
<div class="r" style="left:1229px;top:391px;width:6px;height:13px;background:#0ca649;"></div>
<div class="r" style="left:1235px;top:391px;width:18px;height:13px;background:#0299de;"></div>
<svg class="r" style="left:8px;top:414px" width="12" height="12" viewBox="0 0 12 12"><rect x="1.05" y="1.05" width="9.9" height="9.9" rx="1.8" stroke="#c484f7" stroke-width="1.75" fill="none"/><path d="M6 6.1 L8.7 3.3" stroke="#a548f5" stroke-width="1.5" stroke-linecap="round"/><circle cx="4.1" cy="7.8" r="1.25" fill="#a548f5"/></svg>
<div class="t" style="left:25.30px;top:414px;font-size:12px;line-height:12px;color:#1f1f1f;transform:scaleX(0.9707);">bootstrap-icons.css?_v=638270080180000000</div>
<div class="t" style="left:382.30px;top:414px;font-size:12px;line-height:12px;color:#1f1f1f;transform:scaleX(0.8493);">200</div>
<div class="t" style="left:469.60px;top:414px;font-size:12px;line-height:12px;color:#1f1f1f;transform:scaleX(0.9627);">stylesheet</div>
<div class="t" style="left:604.50px;top:414px;font-size:12px;line-height:12px;color:#1f1f1f;transform:scaleX(0.9826);text-decoration:underline;">:44381/:19</div>
<div class="t" style="left:1021.45px;top:414px;font-size:12px;line-height:12px;color:#1f1f1f;transform:scaleX(0.9650);">75.0 kB</div>
<div class="t" style="left:1185.37px;top:414px;font-size:12px;line-height:12px;color:#1f1f1f;transform:scaleX(0.9650);">6.40 s</div>
<div class="r" style="left:1226px;top:416px;width:2px;height:5px;background:#cfcfcf;"></div>
<div class="r" style="left:1229px;top:412px;width:6px;height:13px;background:#0ca649;"></div>
<div class="r" style="left:1235px;top:412px;width:59px;height:13px;background:#0299de;"></div>
<svg class="r" style="left:8px;top:435px" width="12" height="12" viewBox="0 0 12 12"><rect x="1.05" y="1.05" width="9.9" height="9.9" rx="1.8" stroke="#c484f7" stroke-width="1.75" fill="none"/><path d="M6 6.1 L8.7 3.3" stroke="#a548f5" stroke-width="1.5" stroke-linecap="round"/><circle cx="4.1" cy="7.8" r="1.25" fill="#a548f5"/></svg>
<div class="t" style="left:25.30px;top:435px;font-size:12px;line-height:12px;color:#1f1f1f;transform:scaleX(0.9702);">blazor-global-styles.css?_v=638287447240609309</div>
<div class="t" style="left:382.30px;top:435px;font-size:12px;line-height:12px;color:#1f1f1f;transform:scaleX(0.8493);">200</div>
<div class="t" style="left:469.60px;top:435px;font-size:12px;line-height:12px;color:#1f1f1f;transform:scaleX(0.9627);">stylesheet</div>
<div class="t" style="left:604.50px;top:435px;font-size:12px;line-height:12px;color:#1f1f1f;transform:scaleX(0.9826);text-decoration:underline;">:44381/:20</div>
<div class="t" style="left:1030.45px;top:435px;font-size:12px;line-height:12px;color:#1f1f1f;transform:scaleX(0.9650);">860 B</div>
<div class="t" style="left:1178.93px;top:435px;font-size:12px;line-height:12px;color:#1f1f1f;transform:scaleX(0.9650);">602 ms</div>
<div class="r" style="left:1226px;top:437px;width:2px;height:5px;background:#cfcfcf;"></div>
<div class="r" style="left:1229px;top:433px;width:5px;height:13px;background:#0ca649;"></div>
<div class="r" style="left:1234px;top:433px;width:2px;height:13px;background:#0299de;"></div>
<svg class="r" style="left:8px;top:456px" width="12" height="12" viewBox="0 0 12 12"><rect x="1.05" y="1.05" width="9.9" height="9.9" rx="1.8" stroke="#c484f7" stroke-width="1.75" fill="none"/><path d="M6 6.1 L8.7 3.3" stroke="#a548f5" stroke-width="1.5" stroke-linecap="round"/><circle cx="4.1" cy="7.8" r="1.25" fill="#a548f5"/></svg>
<div class="t" style="left:25.30px;top:456px;font-size:12px;line-height:12px;color:#1f1f1f;transform:scaleX(0.9599);">MyApp.Blazor.styles.css?_v=638287449411235626</div>
<div class="t" style="left:382.30px;top:456px;font-size:12px;line-height:12px;color:#1f1f1f;transform:scaleX(0.8493);">200</div>
<div class="t" style="left:469.60px;top:456px;font-size:12px;line-height:12px;color:#1f1f1f;transform:scaleX(0.9627);">stylesheet</div>
<div class="t" style="left:604.50px;top:456px;font-size:12px;line-height:12px;color:#1f1f1f;transform:scaleX(0.9826);text-decoration:underline;">:44381/:21</div>
<div class="t" style="left:1031.31px;top:456px;font-size:12px;line-height:12px;color:#1f1f1f;transform:scaleX(0.9650);">311 B</div>
<div class="t" style="left:1178.93px;top:456px;font-size:12px;line-height:12px;color:#1f1f1f;transform:scaleX(0.9650);">594 ms</div>
<div class="r" style="left:1226px;top:458px;width:2px;height:5px;background:#cfcfcf;"></div>
<div class="r" style="left:1229px;top:454px;width:5px;height:13px;background:#0ca649;"></div>
<div class="r" style="left:1234px;top:454px;width:2px;height:13px;background:#0299de;"></div>
<svg class="r" style="left:8px;top:477px" width="12" height="12" viewBox="0 0 12 12"><rect x="1.05" y="1.05" width="9.9" height="9.9" rx="1.8" stroke="#c484f7" stroke-width="1.75" fill="none"/><path d="M6 6.1 L8.7 3.3" stroke="#a548f5" stroke-width="1.5" stroke-linecap="round"/><circle cx="4.1" cy="7.8" r="1.25" fill="#a548f5"/></svg>
<div class="t" style="left:25.30px;top:477px;font-size:12px;line-height:12px;color:#1f1f1f;transform:scaleX(0.9399);">Excubo.Blazor.TreeViews.bundle.scp.css</div>
<div class="t" style="left:382.30px;top:477px;font-size:12px;line-height:12px;color:#1f1f1f;transform:scaleX(0.8493);">200</div>
<div class="t" style="left:469.60px;top:477px;font-size:12px;line-height:12px;color:#1f1f1f;transform:scaleX(0.9627);">stylesheet</div>
<div class="t" style="left:604.50px;top:477px;font-size:12px;line-height:12px;color:#1f1f1f;transform:scaleX(0.9515);text-decoration:underline;">MyApp.Blazor.styles.css:1</div>
<div class="t" style="left:1027.89px;top:477px;font-size:12px;line-height:12px;color:#1f1f1f;transform:scaleX(0.9650);">1.1 kB</div>
<div class="t" style="left:1178.93px;top:477px;font-size:12px;line-height:12px;color:#1f1f1f;transform:scaleX(0.9650);">733 ms</div>
<div class="r" style="left:1231px;top:479px;width:2px;height:5px;background:#cfcfcf;"></div>
<div class="r" style="left:1234px;top:475px;width:8px;height:13px;background:#0ca649;"></div>
<div class="r" style="left:1242px;top:475px;width:2px;height:13px;background:#0299de;"></div>
<svg class="r" style="left:8px;top:498px" width="12" height="12" viewBox="0 0 12 12"><rect x="1.05" y="1.05" width="9.9" height="9.9" rx="1.8" stroke="#c484f7" stroke-width="1.75" fill="none"/><path d="M6 6.1 L8.7 3.3" stroke="#a548f5" stroke-width="1.5" stroke-linecap="round"/><circle cx="4.1" cy="7.8" r="1.25" fill="#a548f5"/></svg>
<div class="t" style="left:25.30px;top:498px;font-size:12px;line-height:12px;color:#1f1f1f;">bootstrap-dim.css</div>
<div class="t" style="left:382.30px;top:498px;font-size:12px;line-height:12px;color:#1f1f1f;transform:scaleX(0.8493);">200</div>
<div class="t" style="left:469.60px;top:498px;font-size:12px;line-height:12px;color:#1f1f1f;transform:scaleX(0.9627);">stylesheet</div>
<div class="t" style="left:604.50px;top:498px;font-size:12px;line-height:12px;color:#1f1f1f;transform:scaleX(0.9756);text-decoration:underline;">lepton-x.bundle.min.js?_v=638270080240000000:2</div>
<div class="t" style="left:1024.66px;top:498px;font-size:12px;line-height:12px;color:#1f1f1f;transform:scaleX(0.9650);">261 kB</div>
<div class="t" style="left:1185.37px;top:498px;font-size:12px;line-height:12px;color:#1f1f1f;transform:scaleX(0.9650);">4.74 s</div>
<div class="r" style="left:1358px;top:500px;width:2px;height:5px;background:#cfcfcf;"></div>
<div class="r" style="left:1361px;top:496px;width:6px;height:13px;background:#0ca649;"></div>
<div class="r" style="left:1367px;top:496px;width:43px;height:13px;background:#0299de;"></div>
<svg class="r" style="left:8px;top:519px" width="12" height="12" viewBox="0 0 12 12"><rect x="1.05" y="1.05" width="9.9" height="9.9" rx="1.8" stroke="#c484f7" stroke-width="1.75" fill="none"/><path d="M6 6.1 L8.7 3.3" stroke="#a548f5" stroke-width="1.5" stroke-linecap="round"/><circle cx="4.1" cy="7.8" r="1.25" fill="#a548f5"/></svg>
<div class="t" style="left:25.30px;top:519px;font-size:12px;line-height:12px;color:#1f1f1f;transform:scaleX(0.9318);">dim.css</div>
<div class="t" style="left:382.30px;top:519px;font-size:12px;line-height:12px;color:#1f1f1f;transform:scaleX(0.8493);">200</div>
<div class="t" style="left:469.60px;top:519px;font-size:12px;line-height:12px;color:#1f1f1f;transform:scaleX(0.9627);">stylesheet</div>
<div class="t" style="left:604.50px;top:519px;font-size:12px;line-height:12px;color:#1f1f1f;transform:scaleX(0.9756);text-decoration:underline;">lepton-x.bundle.min.js?_v=638270080240000000:2</div>
<div class="t" style="left:1021.45px;top:519px;font-size:12px;line-height:12px;color:#1f1f1f;transform:scaleX(0.9650);">14.4 kB</div>
<div class="t" style="left:1185.37px;top:519px;font-size:12px;line-height:12px;color:#1f1f1f;transform:scaleX(0.9650);">1.23 s</div>
<div class="r" style="left:1358px;top:521px;width:2px;height:5px;background:#cfcfcf;"></div>
<div class="r" style="left:1361px;top:517px;width:6px;height:13px;background:#0ca649;"></div>
<div class="r" style="left:1367px;top:517px;width:8px;height:13px;background:#0299de;"></div>
<svg class="r" style="left:8px;top:540px" width="12" height="12" viewBox="0 0 12 12"><rect x="1.05" y="1.05" width="9.9" height="9.9" rx="1.8" stroke="#c484f7" stroke-width="1.75" fill="none"/><path d="M6 6.1 L8.7 3.3" stroke="#a548f5" stroke-width="1.5" stroke-linecap="round"/><circle cx="4.1" cy="7.8" r="1.25" fill="#a548f5"/></svg>
<div class="t" style="left:25.30px;top:540px;font-size:12px;line-height:12px;color:#1f1f1f;transform:scaleX(0.9896);">layout-bundle.css</div>
<div class="t" style="left:382.30px;top:540px;font-size:12px;line-height:12px;color:#1f1f1f;transform:scaleX(0.8493);">200</div>
<div class="t" style="left:469.60px;top:540px;font-size:12px;line-height:12px;color:#1f1f1f;transform:scaleX(0.9627);">stylesheet</div>
<div class="t" style="left:604.50px;top:540px;font-size:12px;line-height:12px;color:#1f1f1f;transform:scaleX(0.9921);text-decoration:underline;">leptonx-blazor-compatibility.js?_v=638270080180000000:44</div>
<div class="t" style="left:1024.66px;top:540px;font-size:12px;line-height:12px;color:#1f1f1f;transform:scaleX(0.9650);">200 kB</div>
<div class="t" style="left:1185.37px;top:540px;font-size:12px;line-height:12px;color:#1f1f1f;transform:scaleX(0.9650);">4.38 s</div>
<div class="r" style="left:1359px;top:542px;width:2px;height:5px;background:#cfcfcf;"></div>
<div class="r" style="left:1362px;top:538px;width:7px;height:13px;background:#0ca649;"></div>
<div class="r" style="left:1369px;top:538px;width:38px;height:13px;background:#0299de;"></div>
<svg class="r" style="left:8px;top:561px" width="12" height="12" viewBox="0 0 12 12"><rect x="1.05" y="1.05" width="9.9" height="9.9" rx="1.8" stroke="#c484f7" stroke-width="1.75" fill="none"/><path d="M6 6.1 L8.7 3.3" stroke="#a548f5" stroke-width="1.5" stroke-linecap="round"/><circle cx="4.1" cy="7.8" r="1.25" fill="#a548f5"/></svg>
<div class="t" style="left:25.30px;top:561px;font-size:12px;line-height:12px;color:#1f1f1f;transform:scaleX(0.9806);">abp-bundle.css</div>
<div class="t" style="left:382.30px;top:561px;font-size:12px;line-height:12px;color:#1f1f1f;transform:scaleX(0.8493);">200</div>
<div class="t" style="left:469.60px;top:561px;font-size:12px;line-height:12px;color:#1f1f1f;transform:scaleX(0.9627);">stylesheet</div>
<div class="t" style="left:604.50px;top:561px;font-size:12px;line-height:12px;color:#1f1f1f;transform:scaleX(0.9921);text-decoration:underline;">leptonx-blazor-compatibility.js?_v=638270080180000000:44</div>
<div class="t" style="left:1027.89px;top:561px;font-size:12px;line-height:12px;color:#1f1f1f;transform:scaleX(0.9650);">4.1 kB</div>
<div class="t" style="left:1178.93px;top:561px;font-size:12px;line-height:12px;color:#1f1f1f;transform:scaleX(0.9650);">797 ms</div>
<div class="r" style="left:1359px;top:563px;width:2px;height:5px;background:#cfcfcf;"></div>
<div class="r" style="left:1362px;top:559px;width:7px;height:13px;background:#0ca649;"></div>
<div class="r" style="left:1369px;top:559px;width:2px;height:13px;background:#0299de;"></div>
<svg class="r" style="left:8px;top:582px" width="12" height="12" viewBox="0 0 12 12"><rect x="1.05" y="1.05" width="9.9" height="9.9" rx="1.8" stroke="#c484f7" stroke-width="1.75" fill="none"/><path d="M6 6.1 L8.7 3.3" stroke="#a548f5" stroke-width="1.5" stroke-linecap="round"/><circle cx="4.1" cy="7.8" r="1.25" fill="#a548f5"/></svg>
<div class="t" style="left:25.30px;top:582px;font-size:12px;line-height:12px;color:#1f1f1f;transform:scaleX(0.9750);">blazor-bundle.css</div>
<div class="t" style="left:382.30px;top:582px;font-size:12px;line-height:12px;color:#1f1f1f;transform:scaleX(0.8493);">200</div>
<div class="t" style="left:469.60px;top:582px;font-size:12px;line-height:12px;color:#1f1f1f;transform:scaleX(0.9627);">stylesheet</div>
<div class="t" style="left:604.50px;top:582px;font-size:12px;line-height:12px;color:#1f1f1f;transform:scaleX(0.9921);text-decoration:underline;">leptonx-blazor-compatibility.js?_v=638270080180000000:44</div>
<div class="t" style="left:1027.89px;top:582px;font-size:12px;line-height:12px;color:#1f1f1f;transform:scaleX(0.9650);">7.8 kB</div>
<div class="t" style="left:1185.37px;top:582px;font-size:12px;line-height:12px;color:#1f1f1f;transform:scaleX(0.9650);">1.04 s</div>
<div class="r" style="left:1359px;top:584px;width:2px;height:5px;background:#cfcfcf;"></div>
<div class="r" style="left:1362px;top:580px;width:7px;height:13px;background:#0ca649;"></div>
<div class="r" style="left:1369px;top:580px;width:5px;height:13px;background:#0299de;"></div>
<svg class="r" style="left:8px;top:603px" width="12" height="12" viewBox="0 0 12 12"><rect x="1.05" y="1.05" width="9.9" height="9.9" rx="1.8" stroke="#c484f7" stroke-width="1.75" fill="none"/><path d="M6 6.1 L8.7 3.3" stroke="#a548f5" stroke-width="1.5" stroke-linecap="round"/><circle cx="4.1" cy="7.8" r="1.25" fill="#a548f5"/></svg>
<div class="t" style="left:25.30px;top:603px;font-size:12px;line-height:12px;color:#1f1f1f;transform:scaleX(0.9931);">font-bundle.css</div>
<div class="t" style="left:382.30px;top:603px;font-size:12px;line-height:12px;color:#1f1f1f;transform:scaleX(0.8493);">200</div>
<div class="t" style="left:469.60px;top:603px;font-size:12px;line-height:12px;color:#1f1f1f;transform:scaleX(0.9627);">stylesheet</div>
<div class="t" style="left:604.50px;top:603px;font-size:12px;line-height:12px;color:#1f1f1f;transform:scaleX(0.9921);text-decoration:underline;">leptonx-blazor-compatibility.js?_v=638270080180000000:44</div>
<div class="t" style="left:1030.45px;top:603px;font-size:12px;line-height:12px;color:#1f1f1f;transform:scaleX(0.9650);">214 B</div>
<div class="t" style="left:1178.93px;top:603px;font-size:12px;line-height:12px;color:#1f1f1f;transform:scaleX(0.9650);">623 ms</div>
<div class="r" style="left:1359px;top:605px;width:2px;height:5px;background:#cfcfcf;"></div>
<div class="r" style="left:1362px;top:601px;width:6px;height:13px;background:#0ca649;"></div>
<div class="r" style="left:1368px;top:601px;width:2px;height:13px;background:#0299de;"></div>
<svg class="r" style="left:8px;top:624px" width="12" height="12" viewBox="0 0 12 12"><rect x="1.05" y="1.05" width="9.9" height="9.9" rx="1.8" stroke="#c484f7" stroke-width="1.75" fill="none"/><path d="M6 6.1 L8.7 3.3" stroke="#a548f5" stroke-width="1.5" stroke-linecap="round"/><circle cx="4.1" cy="7.8" r="1.25" fill="#a548f5"/></svg>
<div class="t" style="left:25.30px;top:624px;font-size:12px;line-height:12px;color:#1f1f1f;transform:scaleX(0.9632);">css2?family=Inter:wght@100;200;300;400;500;600;700;800;900&amp;...</div>
<div class="t" style="left:382.30px;top:624px;font-size:12px;line-height:12px;color:#1f1f1f;transform:scaleX(0.8493);">200</div>
<div class="t" style="left:469.60px;top:624px;font-size:12px;line-height:12px;color:#1f1f1f;transform:scaleX(0.9627);">stylesheet</div>
<div class="t" style="left:604.50px;top:624px;font-size:12px;line-height:12px;color:#1f1f1f;transform:scaleX(0.9895);text-decoration:underline;">font-bundle.css:1</div>
<div class="t" style="left:1030.45px;top:624px;font-size:12px;line-height:12px;color:#1f1f1f;transform:scaleX(0.9650);">906 B</div>
<div class="t" style="left:1178.93px;top:624px;font-size:12px;line-height:12px;color:#1f1f1f;transform:scaleX(0.9650);">616 ms</div>
<div class="r" style="left:1366px;top:626px;width:2px;height:5px;background:#cfcfcf;"></div>
<div class="r" style="left:1371px;top:622px;width:6px;height:13px;background:#0ca649;"></div>
<div class="r" style="left:1377px;top:622px;width:2px;height:13px;background:#0299de;"></div>
<div class="r" style="left:0px;top:656px;width:1423px;height:1px;background:#cbcdd1;"></div>
<div class="r" style="left:0px;top:657px;width:1423px;height:26px;background:#f1f3f4;"></div>
<div class="r" style="left:0px;top:683px;width:1423px;height:2px;background:#a9a9a9;"></div>
<div class="t" style="left:12.30px;top:665px;font-size:12px;line-height:12px;color:#474747;transform:scaleX(0.9847);">20 / 55 requests</div>
<div class="r" style="left:106px;top:662px;width:1px;height:16px;background:#c4c7c9;"></div>
<div class="t" style="left:116.70px;top:665px;font-size:12px;line-height:12px;color:#474747;transform:scaleX(0.9849);">1.2 MB / 2.8 MB transferred</div>
<div class="r" style="left:271px;top:662px;width:1px;height:16px;background:#c4c7c9;"></div>
<div class="t" style="left:281.00px;top:665px;font-size:12px;line-height:12px;color:#474747;transform:scaleX(0.9655);">1.2 MB / 2.8 MB resources</div>
<div class="r" style="left:337px;top:82px;width:103px;height:138px;background:#ffffff;border:1px solid #a9a9a9;box-sizing:border-box;box-shadow:0 5px 28px rgba(0,0,0,0.20);"></div>
<div class="t" style="left:345.60px;top:86px;font-size:12px;line-height:12px;color:#000000;transform:scaleX(0.9480);font-weight:bold;">Disabled</div>
<div class="t" style="left:363.40px;top:103px;font-size:12px;line-height:12px;color:#202020;transform:scaleX(1.0512);">No throttling</div>
<div class="t" style="left:345.60px;top:120px;font-size:12px;line-height:12px;color:#000000;transform:scaleX(0.9179);font-weight:bold;">Presets</div>
<div class="r" style="left:337px;top:132px;width:102px;height:21px;background:#ee0f16;"></div>
<div class="r" style="left:339px;top:134px;width:98px;height:17px;background:#1a62d0;"></div>
<div class="t" style="left:363.70px;top:137px;font-size:12px;line-height:12px;color:#ffffff;transform:scaleX(0.8885);">Fast 3G</div>
<div class="t" style="left:363.70px;top:154px;font-size:12px;line-height:12px;color:#202020;transform:scaleX(0.9263);">Slow 3G</div>
<div class="t" style="left:363.70px;top:171px;font-size:12px;line-height:12px;color:#202020;transform:scaleX(1.0159);">Offline</div>
<div class="t" style="left:345.60px;top:188px;font-size:12px;line-height:12px;color:#000000;transform:scaleX(0.9850);font-weight:bold;">Custom</div>
<div class="t" style="left:363.70px;top:205px;font-size:12px;line-height:12px;color:#202020;transform:scaleX(0.9576);">Add...</div>
<div class="r" style="left:457px;top:83px;width:33px;height:30px;background:transparent;border:2px solid #f50a0a;box-sizing:border-box;"></div>
<div class="r" style="left:0px;top:0px;width:1px;height:685px;background:#a9aaad;"></div>
<div class="r" style="left:1421px;top:128px;width:1px;height:528px;background:#d3d5d9;"></div>
<div class="r" style="left:1422px;top:1px;width:1px;height:684px;background:#a3a6ab;"></div>
<div class="r" style="left:1px;top:110px;width:2px;height:18px;background:#8f8f8f;"></div>
<div class="r" style="left:1px;top:128px;width:1px;height:62px;background:#cdd6ea;"></div>
</body></html>
